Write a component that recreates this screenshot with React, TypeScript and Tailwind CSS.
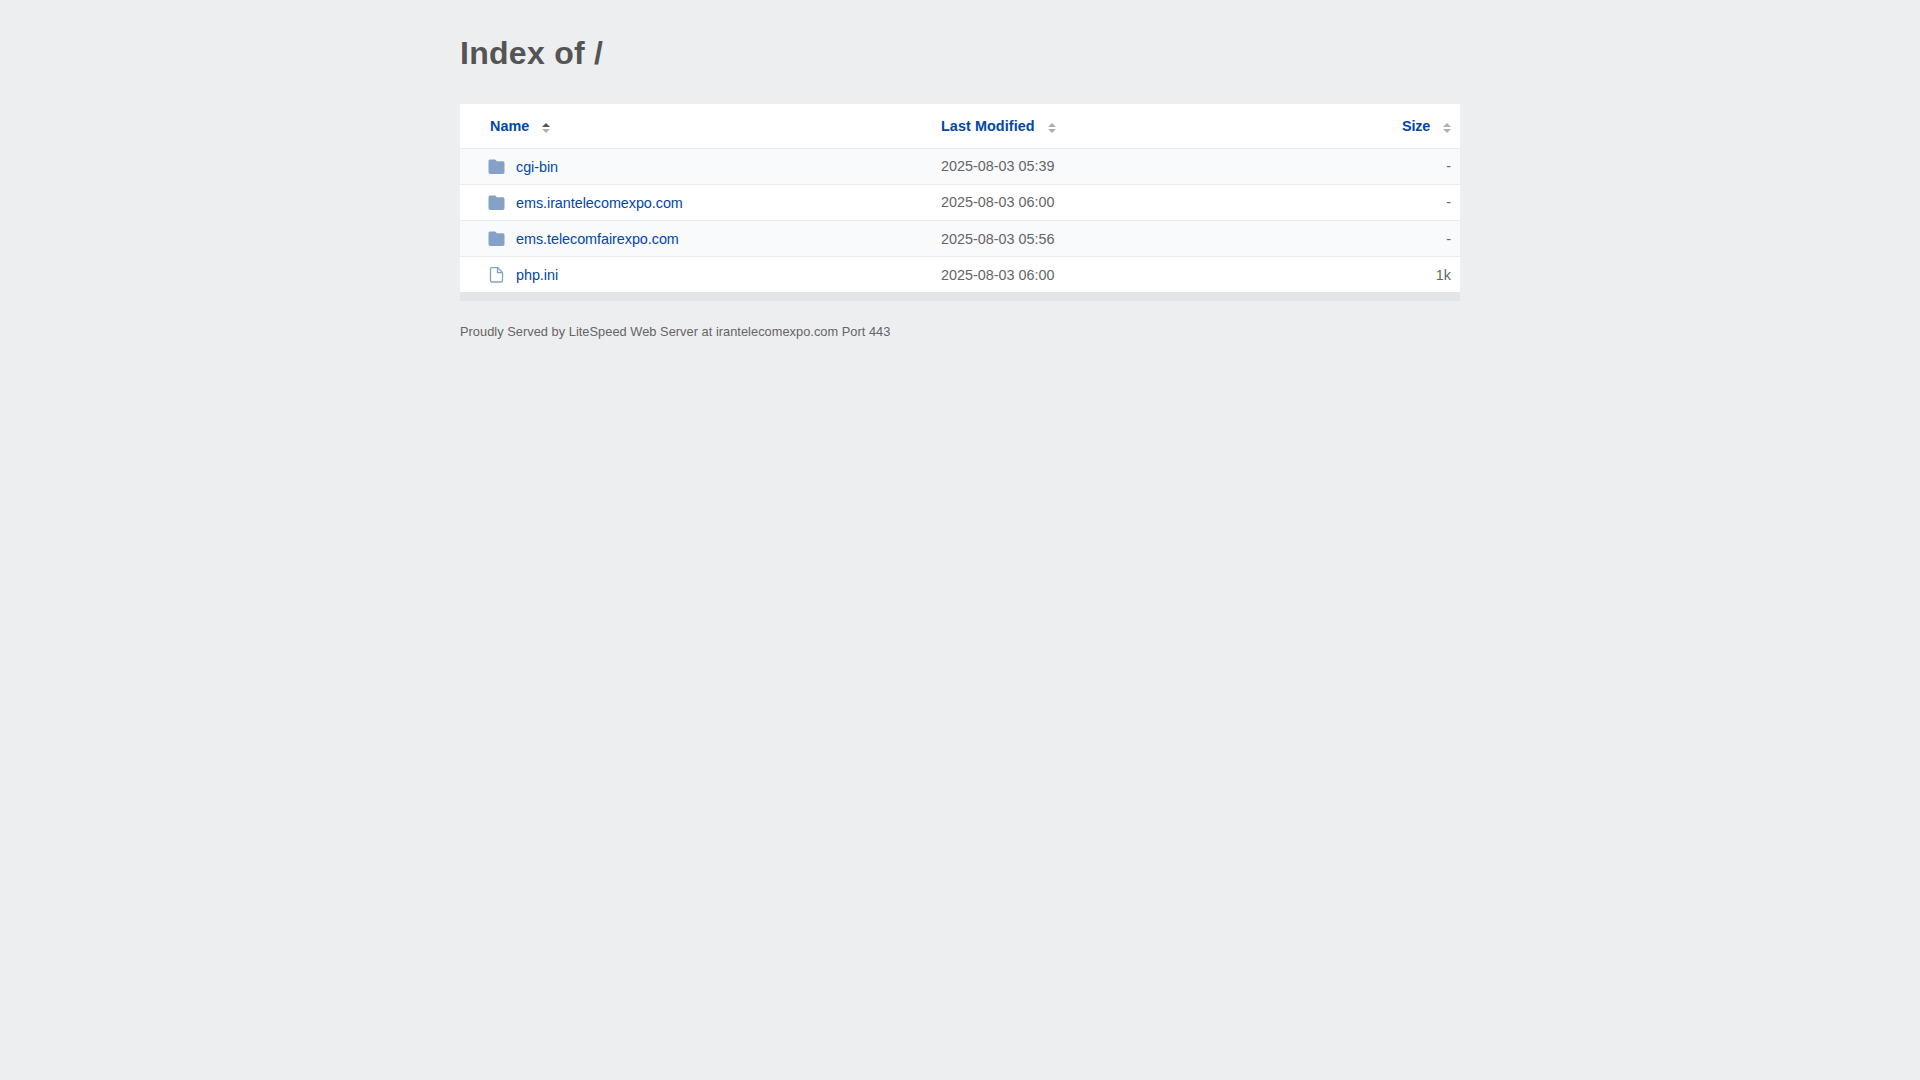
const entries = [
  { name: 'cgi-bin', modified: '2025-08-03 05:39', size: '-', isFolder: true },
  { name: 'ems.irantelecomexpo.com', modified: '2025-08-03 06:00', size: '-', isFolder: true },
  { name: 'ems.telecomfairexpo.com', modified: '2025-08-03 05:56', size: '-', isFolder: true },
  { name: 'php.ini', modified: '2025-08-03 06:00', size: '1k', isFolder: false },
];

const FolderIcon = () => (
  <svg width="17" height="16" viewBox="-0.5 0 17 16" className="block shrink-0" fill="#85a1c7">
    <path d="M2 .5h4.200c.5 0 .9.2 1.200.6L8.300 2.300H14.200A1.700 1.700 0 0 1 16 4v9.300A1.700 1.700 0 0 1 14.300 15H1.700A1.700 1.700 0 0 1 0 13.300V2.200A1.700 1.700 0 0 1 2 .5Z" />
  </svg>
);

const FileIcon = () => (
  <svg width="17" height="16" viewBox="-0.5 0 17 16" className="block shrink-0" fill="none" stroke="#85a1c7" strokeWidth="1.3" strokeLinejoin="round">
    <path d="M3.500 .7h5.700L14 5.500v8a1.500 1.500 0 0 1-1.500 1.500h-9A1.500 1.500 0 0 1 2 13.500v-11.300A1.500 1.500 0 0 1 3.500 .7Z" />
    <path d="M9 .9V5.700h4.800" />
  </svg>
);

const SortIcon = ({ ascending = false }) => (
  <svg width="8" height="10" viewBox="0 0 8 10" className="block shrink-0">
    <path d="M4 0 8 4H0Z" fill={ascending ? '#545454' : '#b0b0b0'} />
    <path d="M0 6h8L4 10Z" fill="#b0b0b0" />
  </svg>
);

const App = () => {
  return (
    <div className="min-h-screen bg-[#edeef0] font-['Liberation_Sans',sans-serif] text-[14.4px] leading-[20px] text-[#656565]">
      <div className="mx-auto w-[1000px] pt-[32px]">
        <h1 className="h-[72px] text-[32px] leading-[42px] font-bold tracking-[0.28px] text-[#545454]">Index of /</h1>

        <div className="bg-white shadow-[0_9px_0_#e3e6e9]">
          <div className="flex h-[44px] items-center pr-[9px] pl-[30px] font-bold text-[#0246a8]">
            <a className="flex w-[451px] items-center gap-[13px]">
              Name
              <span className="pt-[3px]"><SortIcon ascending /></span>
            </a>
            <a className="flex flex-1 items-center gap-[13px] tracking-[0.07px]">
              Last Modified
              <span className="pt-[3px]"><SortIcon /></span>
            </a>
            <a className="flex items-center gap-[13px] tracking-[-0.2px]">
              Size
              <span className="pt-[3px]"><SortIcon /></span>
            </a>
          </div>

          {entries.map((entry) => (
            <div key={entry.name} className="flex h-[36.1px] items-center border-t border-[#e9ebee] pr-[9px] pl-[28px] odd:bg-white even:bg-[#f9fafc]">
              <a className="flex w-[453px] items-center gap-[11px] tracking-[-0.05px] text-[#0246a8]">
                {entry.isFolder ? <FolderIcon /> : <FileIcon />}
                <span className="pt-[0.9px]">{entry.name}</span>
              </a>
              <span className="flex-1 pb-[0.4px]">{entry.modified}</span>
              <span className="pb-[0.4px]">{entry.size}</span>
            </div>
          ))}
        </div>

        <footer className="pt-[30px] text-[12.8px] tracking-[0.035px]">
          Proudly Served by LiteSpeed Web Server at irantelecomexpo.com Port 443
        </footer>
      </div>
    </div>
  );
};

export default App;
